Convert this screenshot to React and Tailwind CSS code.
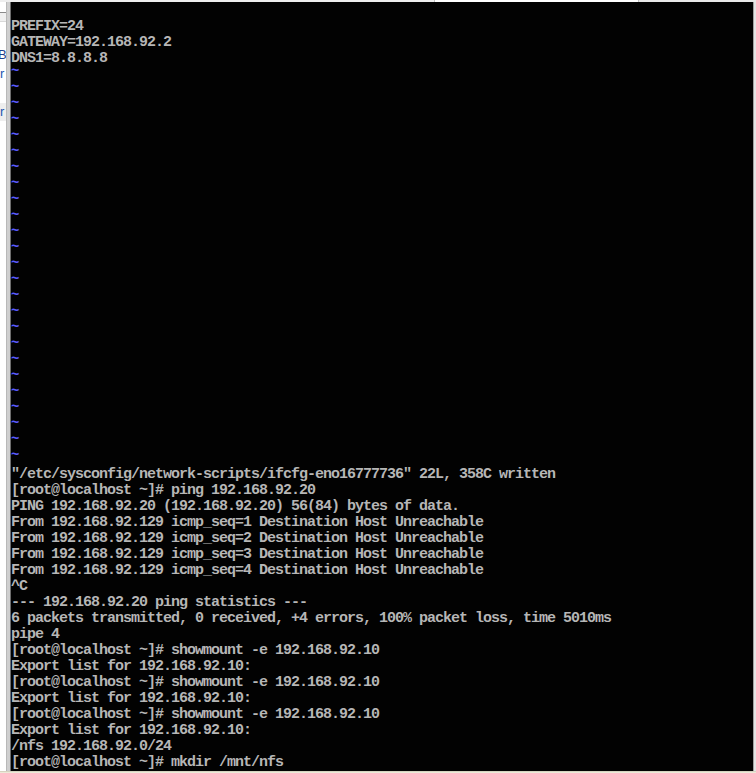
import React from "react";

const head = ["PREFIX=24", "GATEWAY=192.168.92.2", "DNS1=8.8.8.8"];
const tail = [
  '"/etc/sysconfig/network-scripts/ifcfg-eno16777736" 22L, 358C written',
  "[root@localhost ~]# ping 192.168.92.20",
  "PING 192.168.92.20 (192.168.92.20) 56(84) bytes of data.",
  "From 192.168.92.129 icmp_seq=1 Destination Host Unreachable",
  "From 192.168.92.129 icmp_seq=2 Destination Host Unreachable",
  "From 192.168.92.129 icmp_seq=3 Destination Host Unreachable",
  "From 192.168.92.129 icmp_seq=4 Destination Host Unreachable",
  "^C",
  "--- 192.168.92.20 ping statistics ---",
  "6 packets transmitted, 0 received, +4 errors, 100% packet loss, time 5010ms",
  "pipe 4",
  "[root@localhost ~]# showmount -e 192.168.92.10",
  "Export list for 192.168.92.10:",
  "[root@localhost ~]# showmount -e 192.168.92.10",
  "Export list for 192.168.92.10:",
  "[root@localhost ~]# showmount -e 192.168.92.10",
  "Export list for 192.168.92.10:",
  "/nfs 192.168.92.0/24",
  "[root@localhost ~]# mkdir /mnt/nfs",
];

const tildes = Array.from({ length: 25 });

export default function App() {
  return (
    <div className="w-[756px] h-[773px] overflow-hidden flex flex-col bg-[#f0f0f0]">
      <div className="h-[2px] flex shrink-0">
        <div className="w-[435px] bg-[#eeeeee] border-r border-[#c0c0c0]" />
        <div className="w-[204px] bg-[#ffffff] border-r border-[#c0c0c0]" />
        <div className="flex-1 bg-[#e8e8e8]" />
      </div>
      <div className="flex-1 flex min-h-0">
        <div className="w-[11px] flex shrink-0">
          <div className="w-[6px] flex flex-col bg-white overflow-hidden">
            <div className="h-[11px] bg-white border-b border-[#8a8a8a]" />
            <div className="h-[9px] bg-[#f0f0f0] border-b border-[#d8d8d8]" />
            <div className="flex flex-col font-['Liberation_Sans',sans-serif] text-[13px] leading-[14px] text-[#1a3f8c]">
              <div className="h-[26px]" />
              <div className="-ml-[2px] overflow-hidden">B</div>
              <div className="h-[5px]" />
              <div className="-ml-[3px] overflow-hidden text-[#2458b0]">ir</div>
              <div className="h-[22px]" />
              <div className="-ml-[3px] overflow-hidden text-[#2458b0] bg-[#eeeeee] py-[2px]">ir</div>
            </div>
          </div>
          <div className="w-[1px] bg-[#b8b8b8]" />
          <div className="w-[3px] bg-[#cfcfcf]" />
          <div className="w-[1px] bg-[#6e6e6e]" />
        </div>
        <div className="flex-1 bg-[#020202] pt-[17px] overflow-hidden font-['Liberation_Mono',monospace] font-bold text-[15px] leading-[16px] tracking-[-1px] text-[#b6b6b6] whitespace-pre">
          {head.map((l, i) => (
            <div key={"h" + i} className="h-[16px]">{l}</div>
          ))}
          {tildes.map((_, i) => (
            <div key={"t" + i} className="h-[16px] text-[#5a5aff]">
              <span className="relative -top-[4px] text-[14px]">~</span>
            </div>
          ))}
          {tail.map((l, i) => (
            <div key={"l" + i} className="h-[16px]">{l}</div>
          ))}
        </div>
        <div className="w-[3px] shrink-0 border-l border-[#a0a0a0] bg-[#e4e4e4]" />
      </div>
      <div className="h-[2px] shrink-0 bg-[#ece9d8] border-t border-[#d6d3c0]" />
    </div>
  );
}
